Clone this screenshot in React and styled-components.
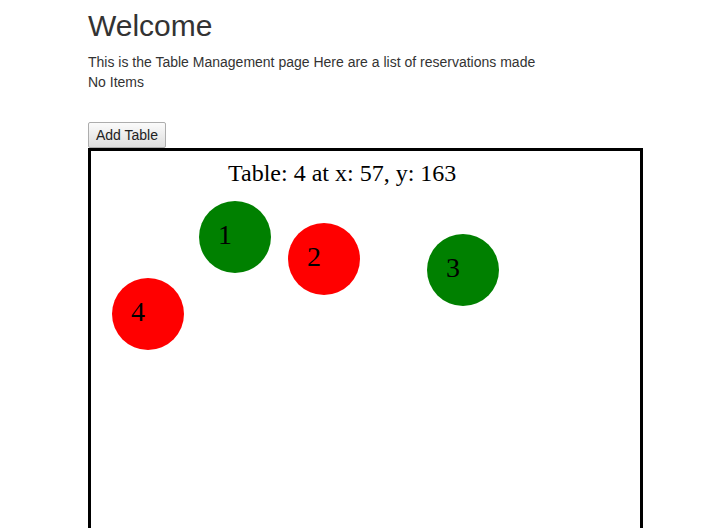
import React from 'react';
import styled, { createGlobalStyle } from 'styled-components';

const GlobalStyle = createGlobalStyle`
	body {
		margin: 0;
		font-family: "Liberation Sans", Arial, sans-serif;
		font-size: 14px;
		line-height: 20px;
		color: #333;
		background: #fff;
	}
`;

const Container = styled.div`
	display: flex;
	flex-direction: column;
	align-items: flex-start;
	padding: 9px 0 0 88px;
`;

const Title = styled.h2`
	margin: 0 0 10px;
	font-size: 30px;
	font-weight: 500;
	line-height: 33px;
`;

const Text = styled.div`
	line-height: 20px;
`;

const AddButton = styled.button`
	margin-top: 30px;
	height: 26px;
	padding: 0 7px;
	font-family: "Liberation Sans", Arial, sans-serif;
	font-size: 14px;
	color: #222;
	background: linear-gradient(#fbfbfb, #dedede);
	border: 1px solid #adadad;
	border-radius: 2px;
	cursor: pointer;
`;

const Stage = styled.div`
	position: relative;
	width: 549px;
	height: 560px;
	border: 3px solid #000;
	background: #fff;
	font-family: "Liberation Serif", "Times New Roman", serif;
	color: #000;
`;

const Caption = styled.div`
	position: absolute;
	left: 137px;
	top: 8px;
	font-size: 24px;
	line-height: 28px;
	white-space: nowrap;
`;

const Table = styled.div`
	position: absolute;
	width: 72px;
	height: 72px;
	border-radius: 50%;
	background: ${props => props.free ? 'green' : 'red'};
`;

const TableNumber = styled.span`
	position: absolute;
	left: 19px;
	top: 20px;
	font-size: 28px;
	line-height: 28px;
`;

const tables = [
	{ id: 1, x: 144, y: 86, free: true },
	{ id: 2, x: 233, y: 108, free: false },
	{ id: 3, x: 372, y: 119, free: true },
	{ id: 4, x: 57, y: 163, free: false },
];

const App = () => {
	const selected = tables[3];
	return (
		<Container>
			<GlobalStyle />
			<Title>Welcome</Title>
			<Text>This is the Table Management page Here are a list of reservations made</Text>
			<Text>No Items</Text>
			<AddButton>Add Table</AddButton>
			<Stage>
				<Caption>Table: {selected.id} at x: {selected.x}, y: {selected.y}</Caption>
				{tables.map(t => (
					<Table key={t.id} free={t.free} style={{ left: t.x - 36, top: t.y - 36 }}>
						<TableNumber>{t.id}</TableNumber>
					</Table>
				))}
			</Stage>
		</Container>
	);
};

export default App;
